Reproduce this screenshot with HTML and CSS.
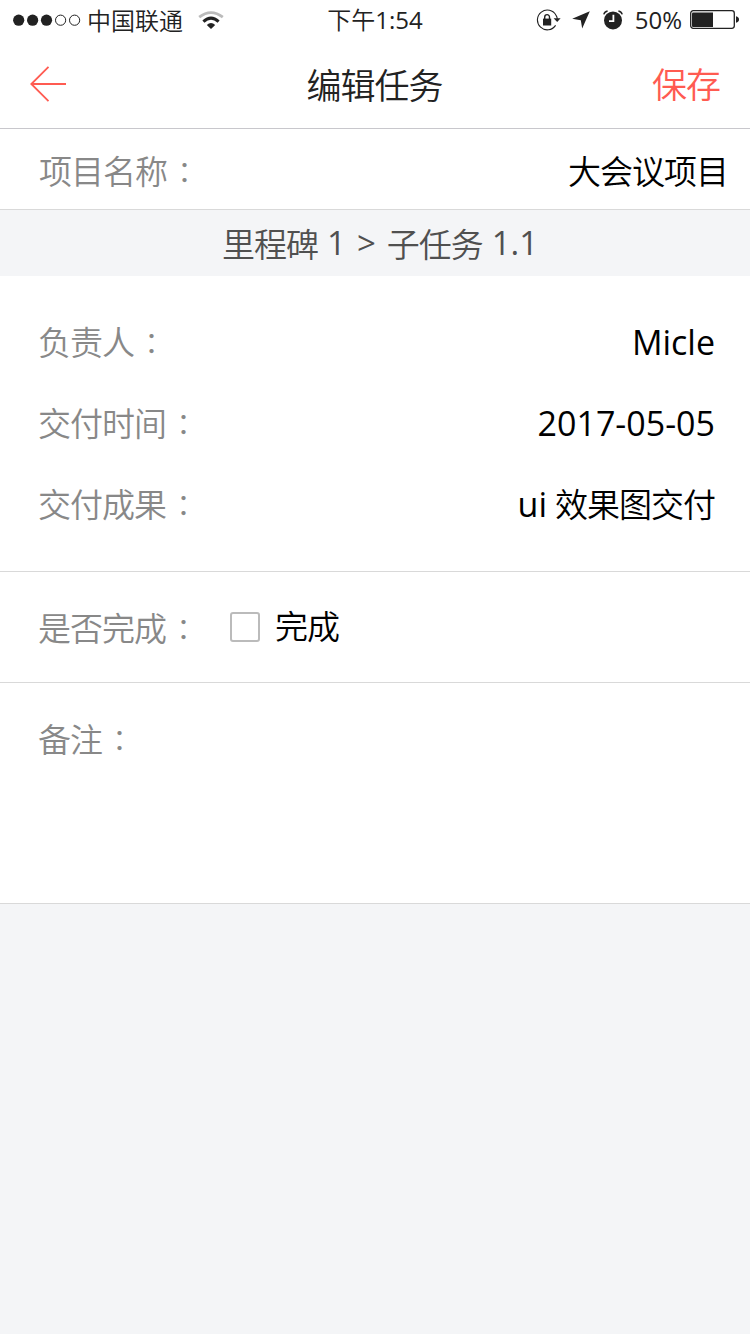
FILE: index.html
```html
<!DOCTYPE html>
<html lang="zh-CN">
<head>
<meta charset="utf-8">
<title>编辑任务</title>
<link rel="stylesheet" href="styles.css">
</head>
<body>
<header class="top">
  <div class="status">
    <div class="status-left">
      <svg class="dots" width="68" height="12" viewBox="0 0 68 12"><g fill="#222"><circle cx="5.7" cy="6.2" r="5.6"/><circle cx="19.6" cy="6.2" r="5.6"/><circle cx="33.5" cy="6.2" r="5.6"/></g><g fill="none" stroke="#222"><circle cx="47.6" cy="6.2" r="5.1"/><circle cx="61.6" cy="6.2" r="5.1"/></g></svg>
      <span class="carrier">中国联通</span>
      <svg class="wifi" width="26" height="18" viewBox="0 0 26 18"><g fill="none"><path d="M1.2 6.2Q13-3 24.8 6.2" stroke="#bbb" stroke-width="2.8"/><path d="M5.4 10.6Q13 3.6 20.6 10.6" stroke="#222" stroke-width="3"/></g><path d="M8.8 14Q13 10.2 17.2 14L13 18Z" fill="#222"/></svg>
    </div>
    <div class="clock">下午<span class="lat">1:54</span></div>
    <div class="status-right">
      <svg width="25" height="22" viewBox="0 0 25 22"><path d="M20.1 6.4A9.9 9.9 0 1 0 19.6 16.4" fill="none" stroke="#222" stroke-width="1.1"/><path d="M17.6 9.2H24.6L21.2 13Z" fill="#222"/><path d="M20.1 6.4Q21.2 8.3 21.3 10" fill="none" stroke="#222" stroke-width="1.1"/><path d="M7 9.6H15.2V16.5H7Z" fill="#222"/><path d="M8.7 10.2V8.2A2.4 2.6 0 0 1 13.5 8.2V10.2" fill="none" stroke="#222" stroke-width="1.4"/></svg>
      <svg class="arrow" width="18" height="18" viewBox="0 0 18 18"><path d="M17.8 0.2L10.2 17.4L8.8 9.2L0.2 7.8Z" fill="#222"/></svg>
      <svg class="alarm" width="20" height="20" viewBox="0 0 20 20"><circle cx="10" cy="10.4" r="9" fill="#222"/><path d="M.8 4.4Q1.6 1.4 4.6.9M19.2 4.4Q18.4 1.4 15.4.9" fill="none" stroke="#222" stroke-width="1.5"/><path d="M10.4 4.8V11.2H6" fill="none" stroke="#fff" stroke-width="1.8"/></svg>
      <span class="percent">50%</span>
      <svg class="battery" width="50" height="20" viewBox="0 0 50 20"><rect x=".7" y=".7" width="43.6" height="17.6" rx="2.5" fill="none" stroke="#222" stroke-width="1.3"/><path d="M3 2.4H23V17H3Q2 17 2 16V3.4Q2 2.4 3 2.4Z" fill="#222"/><path d="M46 6.3Q49 7 49 9.5T46 12.7Z" fill="#222"/></svg>
    </div>
  </div>
  <nav class="nav">
    <svg class="back" width="38" height="38" viewBox="0 0 38 38"><path d="M19.5 1.8L2.3 19L19.5 36.2M2.3 19H37" fill="none" stroke="#ff5b51" stroke-width="1.8"/></svg>
    <h1 class="title">编辑任务</h1>
    <span class="save">保存</span>
  </nav>
</header>
<main>
  <section class="row project"><span class="label">项目名称<span class="colon" lang="zh-TW">：</span></span><span class="value">大会议项目</span></section>
  <section class="crumb"><span>里程碑</span><span class="lat">1</span><span class="lat gt">&gt;</span><span>子任务</span><span class="lat">1.1</span></section>
  <section class="details">
    <div class="row"><span class="label">负责人<span class="colon" lang="zh-TW">：</span></span><span class="value lat name">Micle</span></div>
    <div class="row"><span class="label">交付时间<span class="colon" lang="zh-TW">：</span></span><span class="value lat date">2017-05-05</span></div>
    <div class="row"><span class="label">交付成果<span class="colon" lang="zh-TW">：</span></span><span class="value result"><span class="lat">ui</span><span>效果图交付</span></span></div>
  </section>
  <section class="done"><span class="label">是否完成<span class="colon" lang="zh-TW">：</span></span><span class="box"></span><span class="done-text">完成</span></section>
  <section class="remark"><span class="label">备注<span class="colon" lang="zh-TW">：</span></span></section>
</main>
</body>
</html>
```
FILE: styles.css
```css
* { box-sizing: border-box; }
body {
  margin: 0;
  width: 750px;
  min-height: 1334px;
  background: #f4f5f7;
  color: #000;
  font-family: "Noto Sans CJK SC", sans-serif;
  font-weight: 350;
  font-size: 33px;
  letter-spacing: -1px;
  line-height: 48px;
  white-space: nowrap;
}
svg { display: block; flex: none; }
.lat { font-family: "Open Sans", "Noto Sans CJK SC", sans-serif; font-weight: 400; font-size: 34px; letter-spacing: 0; }
.colon { margin: 0 1px 0 3px; font-family: "Noto Sans CJK TC", sans-serif; font-size: 29px; line-height: 1; }
.top { height: 129px; background: #fff; border-bottom: 1px solid #c8c7cc; color: #222; }
.status { display: grid; grid-template-columns: 1fr auto 1fr; height: 40px; font-size: 24px; line-height: 40px; letter-spacing: 0; }
.status .lat { font-size: 24px; }
.status-left { display: flex; align-items: center; padding-left: 13px; }
.carrier { margin-left: 6px; }
.wifi { margin-left: 15px; }
.clock { line-height: 38px; }
.status-right { display: flex; align-items: center; justify-content: flex-end; padding-right: 10px; }
.arrow { margin-left: 11px; }
.alarm { margin-left: 13px; }
.percent { margin-left: 12px; font-family: "Open Sans", sans-serif; font-weight: 400; font-size: 24px; }
.battery { margin-left: 8px; }
.nav { display: grid; grid-template-columns: 1fr auto 1fr; align-items: center; height: 88px; padding: 0 30px 0 29px; }
.title { margin: 0; padding-bottom: 1px; font-size: 35px; font-weight: 350; line-height: 48px; }
.save { justify-self: end; padding-bottom: 3px; font-size: 35px; color: #ff5b51; }
.label { color: #888; }
.row { display: flex; justify-content: space-between; align-items: center; height: 81px; padding: 0 35px 0 38px; }
.project { padding: 1px 22px 0 39px; background: #fff; border-bottom: 1px solid #d9d9d9; }
.crumb { display: flex; align-items: center; height: 66px; padding-left: 222px; color: #505050; }
.crumb .lat { margin-left: 9px; font-size: 33px; }
.crumb .gt { margin: 0 11px 0 11px; }
.details { height: 296px; padding-top: 24px; background: #fff; border-bottom: 1px solid #d9d9d9; }
.details .lat { padding-top: 3px; }
.result { display: flex; align-items: center; gap: 8px; }
.done { display: flex; align-items: center; height: 111px; padding-left: 38px; background: #fff; border-bottom: 1px solid #d9d9d9; }
.box { width: 30px; height: 30px; margin: 0 15px 0 32px; border: 2px solid #bbb; border-radius: 3px; }
.done-text { padding-bottom: 4px; }
.remark { height: 221px; padding: 31px 38px; background: #fff; border-bottom: 1px solid #d9d9d9; }
```
